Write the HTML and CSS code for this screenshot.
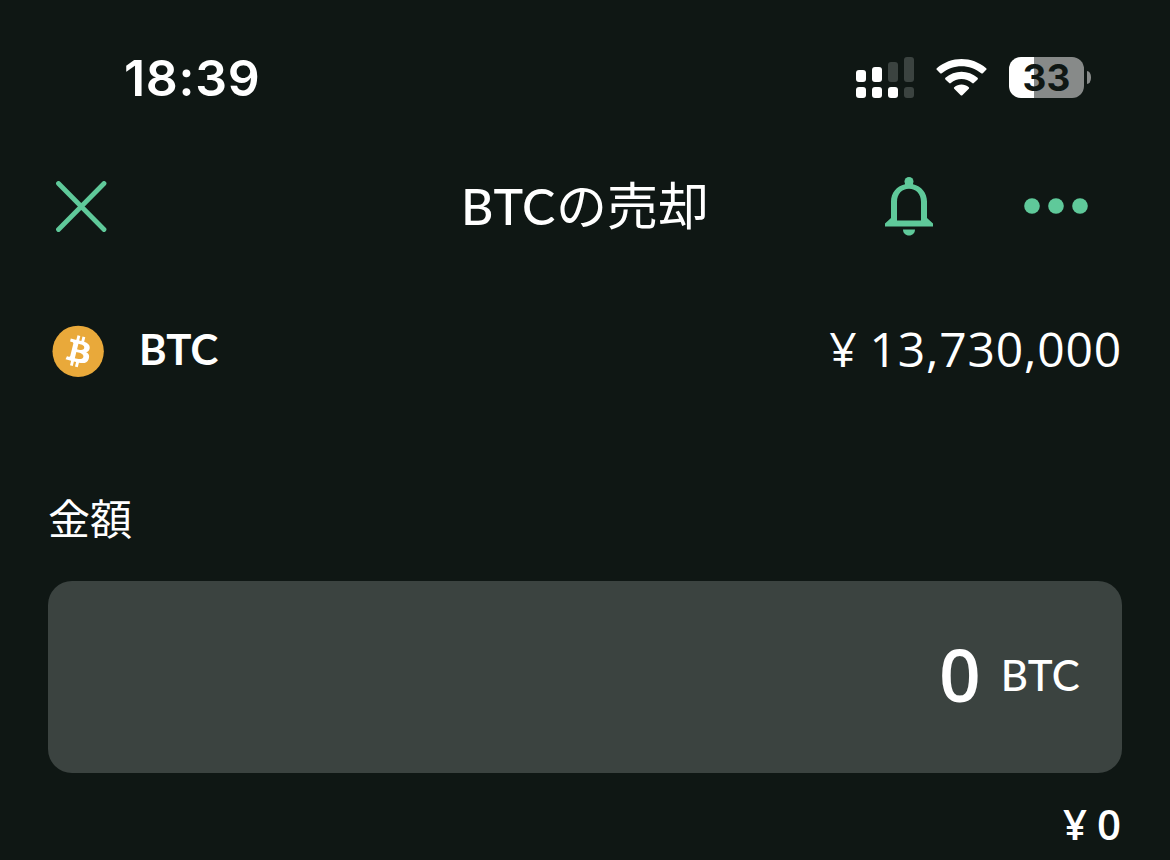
FILE: index.html
```html
<!DOCTYPE html>
<html lang="ja">
<head>
    <meta charset="UTF-8">
    <meta name="viewport" content="width=device-width, initial-scale=1.0">
    <title>BTCの売却</title>
    <link rel="stylesheet" href="styles.css">
</head>
<body>
    <div class="status-bar">
        <span class="time">18:39</span>
        <div class="status-icons">
            <svg class="signal" width="58" height="41" viewBox="0 0 58 41">
                <g fill="#fff">
                    <rect x="0" y="13" width="10" height="12" rx="3"/>
                    <rect x="16" y="10" width="10" height="15" rx="3"/>
                    <rect x="0" y="30" width="10" height="11" rx="3"/>
                    <rect x="16" y="30" width="10" height="11" rx="3"/>
                    <rect x="32" y="30" width="10" height="11" rx="3"/>
                </g>
                <g fill="#3b4340">
                    <rect x="32" y="5" width="10" height="20" rx="3"/>
                    <rect x="48" y="0" width="10" height="25" rx="3"/>
                    <rect x="48" y="30" width="10" height="11" rx="3"/>
                </g>
            </svg>
            <svg class="wifi" width="51" height="41" viewBox="0 0 51 41" fill="#fff">
                <path d="M.8 11.2Q0 12 .8 12.8L4.200 16.200Q5 17 5.800 16.200C17 6.800 34 6.800 45.200 16.200Q46 17 46.800 16.200L50.200 12.800Q51 12 50.200 11.200C36-1.200 15-1.200.8 11.200Z"/>
                <path d="M9.400 20.800Q8.700 21.600 9.400 22.400L13.200 26Q14 26.800 14.800 26C21 20.600 30 20.600 36.200 26Q37 26.800 37.800 26L41.600 22.400Q42.300 21.600 41.600 20.800C32.500 12.600 18.500 12.600 9.400 20.800Z"/>
                <path d="M18.200 30.200Q17.500 31 18.200 31.700L24.700 38.200Q25.500 39 26.300 38.200L32.800 31.700Q33.500 31 32.800 30.200C28.500 26.600 22.500 26.600 18.200 30.200Z"/>
            </svg>
            <div class="battery"><span>33</span></div>
            <div class="battery-tip"></div>
        </div>
    </div>

    <header class="nav">
        <svg class="close" width="52" height="52" viewBox="0 0 52 52">
            <path d="M3.500 2.500L49 48.500M49 2.500L3.500 48.500"/>
        </svg>
        <h1><span class="latin">BTC</span>の売却</h1>
        <div class="nav-actions">
            <svg class="bell" width="48" height="59" viewBox="0 0 48 59">
                <circle cx="24" cy="4.500" r="4.500"/>
                <path fill-rule="evenodd" d="M20 4V7.200C11.500 9 6 16 6 24.500V41L0 46.500V49.500H48V46.500L42 41V24.500C42 16 36.500 9 28 7.200V4ZM12 43.500V25C12 17 17 11.800 24 11.800S36 17 36 25V43.500Z"/>
                <path d="M18 52.500H30C30 56 27.500 58.500 24 58.500S18 56 18 52.500Z"/>
            </svg>
            <svg class="more" width="64" height="18" viewBox="0 0 64 18">
                <circle cx="8" cy="8" r="7.800"/>
                <circle cx="32" cy="8" r="7.800"/>
                <circle cx="56" cy="8" r="7.800"/>
            </svg>
        </div>
    </header>

    <section class="asset">
        <svg class="coin" width="52" height="52" viewBox="-.3 -.4 32.400 32.400">
            <circle cx="16" cy="16" r="16" fill="#e9a93a"/>
            <path fill="#fff" d="M23.189 14.02c.314-2.096-1.283-3.223-3.465-3.975l.708-2.84-1.728-.43-.69 2.765c-.454-.114-.92-.22-1.385-.326l.695-2.783L15.596 6l-.708 2.839c-.376-.086-.746-.17-1.104-.26l.002-.009-2.384-.595-.46 1.846s1.283.294 1.256.312c.7.175.826.638.805 1.006l-.806 3.235c.048.012.11.03.18.057l-.183-.045-1.13 4.532c-.086.212-.303.531-.793.41.018.025-1.256-.313-1.256-.313l-.858 1.978 2.25.561c.418.105.828.215 1.231.318l-.715 2.872 1.727.43.708-2.84c.472.127.93.245 1.378.357l-.706 2.828 1.728.43.715-2.866c2.948.558 5.164.333 6.097-2.333.752-2.146-.037-3.385-1.588-4.192 1.13-.26 1.98-1.003 2.207-2.538zm-3.95 5.538c-.533 2.147-4.148.986-5.32.695l.95-3.805c1.172.293 4.929.872 4.37 3.11zm.535-5.569c-.487 1.953-3.495.96-4.47.717l.86-3.45c.975.243 4.118.696 3.61 2.733z"/>
        </svg>
        <span class="asset-name">BTC</span>
        <span class="price"><span class="yen">¥</span>13,730,000</span>
    </section>

    <main class="amount">
        <h2>金額</h2>
        <div class="amount-box">
            <span class="value">0</span>
            <span class="unit">BTC</span>
        </div>
        <div class="fiat"><span class="yen">¥</span>0</div>
    </main>
</body>
</html>
```
FILE: styles.css
```css
* {
    box-sizing: border-box;
}

body {
    margin: 0;
    height: 860px;
    overflow: hidden;
    background: #0f1714;
    font-family: Lato, "Noto Sans CJK JP", sans-serif;
    font-weight: 500;
    color: #fff;
}

h1, h2 {
    margin: 0;
    font-weight: 400;
}

svg {
    display: block;
    flex: none;
}

/* Status bar */
.status-bar {
    display: flex;
    justify-content: space-between;
    align-items: center;
    height: 155px;
    padding: 0 79px 0 124px;
}

.time {
    font: 600 50px/60px Inter, sans-serif;
    letter-spacing: 0.7px;
}

.status-icons {
    display: flex;
    align-items: center;
}

.wifi {
    margin: 0 22px;
}

.battery {
    width: 75px;
    height: 41px;
    border-radius: 12px;
    background: linear-gradient(90deg, #fff 25px, #878a89 25px);
    color: #0f1714;
    font: 700 37px/42px Inter, sans-serif;
    text-align: center;
}

.battery-tip {
    width: 4px;
    height: 13px;
    margin-left: 3px;
    border-radius: 0 4px 4px 0 / 0 6px 6px 0;
    background: #878a89;
}

/* Navigation */
.nav {
    display: grid;
    grid-template-columns: 1fr auto 1fr;
    align-items: center;
    height: 103px;
    padding: 0 82px;
}

.close {
    margin-left: -27px;
    fill: none;
    stroke: #5fc99a;
    stroke-width: 4.8;
    stroke-linecap: round;
}

.nav h1 {
    padding-bottom: 1px;
    font-size: 51px;
    line-height: 60px;
}

.nav h1 .latin {
    font-size: 50px;
    font-weight: 500;
    letter-spacing: 0.5px;
}

.nav-actions {
    display: flex;
    justify-content: flex-end;
    align-items: center;
    gap: 91px;
    fill: #5fc99a;
}

/* Asset */
.asset {
    display: flex;
    align-items: center;
    height: 186px;
    padding: 0 48px 0 52px;
}

.asset-name {
    margin-left: 35px;
    padding-bottom: 4px;
    font-size: 42px;
    font-weight: 700;
}

.price,
.value,
.fiat {
    font-family: "Open Sans", sans-serif;
}

.price {
    margin-left: auto;
    padding-bottom: 6px;
    font-size: 48px;
    letter-spacing: 0.8px;
}

.price .yen {
    margin-right: 12px;
}

/* Amount */
.amount {
    padding: 45px 48px 0;
}

.amount h2 {
    height: 92px;
    font-size: 42px;
    line-height: 60px;
}

.amount-box {
    display: flex;
    justify-content: flex-end;
    align-items: center;
    height: 192px;
    padding: 0 42px 4px 0;
    border-radius: 24px;
    background: #3b4340;
}

.value {
    padding-bottom: 3px;
    font-size: 73px;
    font-weight: 600;
    line-height: 80px;
}

.unit {
    margin-left: 20px;
    font-size: 42px;
    letter-spacing: 0.3px;
}

.fiat {
    margin-top: 26px;
    padding-right: 1px;
    font-size: 42px;
    font-weight: 600;
    line-height: 50px;
    text-align: right;
}

.fiat .yen {
    margin-right: 10px;
}
```
